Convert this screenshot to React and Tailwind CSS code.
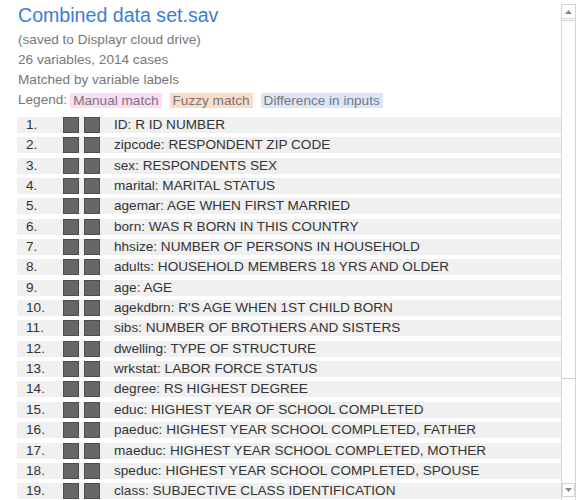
const ROWS = [
  'ID: R ID NUMBER',
  'zipcode: RESPONDENT ZIP CODE',
  'sex: RESPONDENTS SEX',
  'marital: MARITAL STATUS',
  'agemar: AGE WHEN FIRST MARRIED',
  'born: WAS R BORN IN THIS COUNTRY',
  'hhsize: NUMBER OF PERSONS IN HOUSEHOLD',
  'adults: HOUSEHOLD MEMBERS 18 YRS AND OLDER',
  'age: AGE',
  "agekdbrn: R'S AGE WHEN 1ST CHILD BORN",
  'sibs: NUMBER OF BROTHERS AND SISTERS',
  'dwelling: TYPE OF STRUCTURE',
  'wrkstat: LABOR FORCE STATUS',
  'degree: RS HIGHEST DEGREE',
  'educ: HIGHEST YEAR OF SCHOOL COMPLETED',
  'paeduc: HIGHEST YEAR SCHOOL COMPLETED, FATHER',
  'maeduc: HIGHEST YEAR SCHOOL COMPLETED, MOTHER',
  'speduc: HIGHEST YEAR SCHOOL COMPLETED, SPOUSE',
  'class: SUBJECTIVE CLASS IDENTIFICATION',
]

export default function App() {
  return (
    <div className="flex h-[500px] w-[576px] overflow-hidden bg-white font-['Liberation_Sans',Arial,sans-serif]">
      <div className="min-w-0 flex-1 pt-[4px]">
        <h1 className="pl-[18px] text-[19.6px] leading-[23px] text-[#3b7dd6]">
          Combined data set.sav
        </h1>
        <div className="mt-[3px] pl-[18px] text-[13.6px] leading-[20px] text-[#777]">
          <p>(saved to Displayr cloud drive)</p>
          <p>26 variables, 2014 cases</p>
          <p>Matched by variable labels</p>
          <div className="flex items-center">
            <span>Legend:</span>
            <span className="ml-[3px] h-[15px] bg-[#fcdcf6] px-[3px] leading-[15px]">
              Manual match
            </span>
            <span className="ml-[8px] h-[15px] bg-[#fcdcc6] px-[3px] leading-[15px]">
              Fuzzy match
            </span>
            <span className="ml-[8px] h-[15px] bg-[#dce6fa] px-[3px] leading-[15px]">
              Difference in inputs
            </span>
          </div>
        </div>

        <div className="mt-[7px] pl-[17px]">
          {ROWS.map((label, i) => (
            <div
              key={i}
              className="mb-[4.35px] flex h-[16px] items-center bg-[#f0f0f0] text-[13.6px] leading-[16px] text-[#333]"
            >
              <span className="w-[46px] shrink-0 pl-[9px]">{i + 1}.</span>
              <span className="h-[16px] w-[16px] shrink-0 border border-[#4d4d4d] bg-[#666]" />
              <span className="ml-[5px] h-[16px] w-[16px] shrink-0 border border-[#4d4d4d] bg-[#666]" />
              <span className="ml-[14px] whitespace-nowrap">{label}</span>
            </div>
          ))}
        </div>
      </div>

      <div className="mt-[4px] flex h-[496px] w-[15px] shrink-0 flex-col border-x border-t border-[#d4d4d4] bg-white">
        <div className="flex h-[14px] items-center justify-center border-b border-[#d4d4d4]">
          <svg width="7" height="4" viewBox="0 0 7 4">
            <polygon points="0,4 3.5,0 7,4" fill="#8a8a8a" />
          </svg>
        </div>
        <div className="mt-[1px] h-[359px] border-y border-[#cfcfcf] bg-white" />
        <div className="flex-1" />
        <div className="mb-[3px] flex h-[14px] items-center justify-center border border-[#d4d4d4]">
          <svg width="7" height="4" viewBox="0 0 7 4">
            <polygon points="0,0 7,0 3.5,4" fill="#8a8a8a" />
          </svg>
        </div>
      </div>
    </div>
  )
}
